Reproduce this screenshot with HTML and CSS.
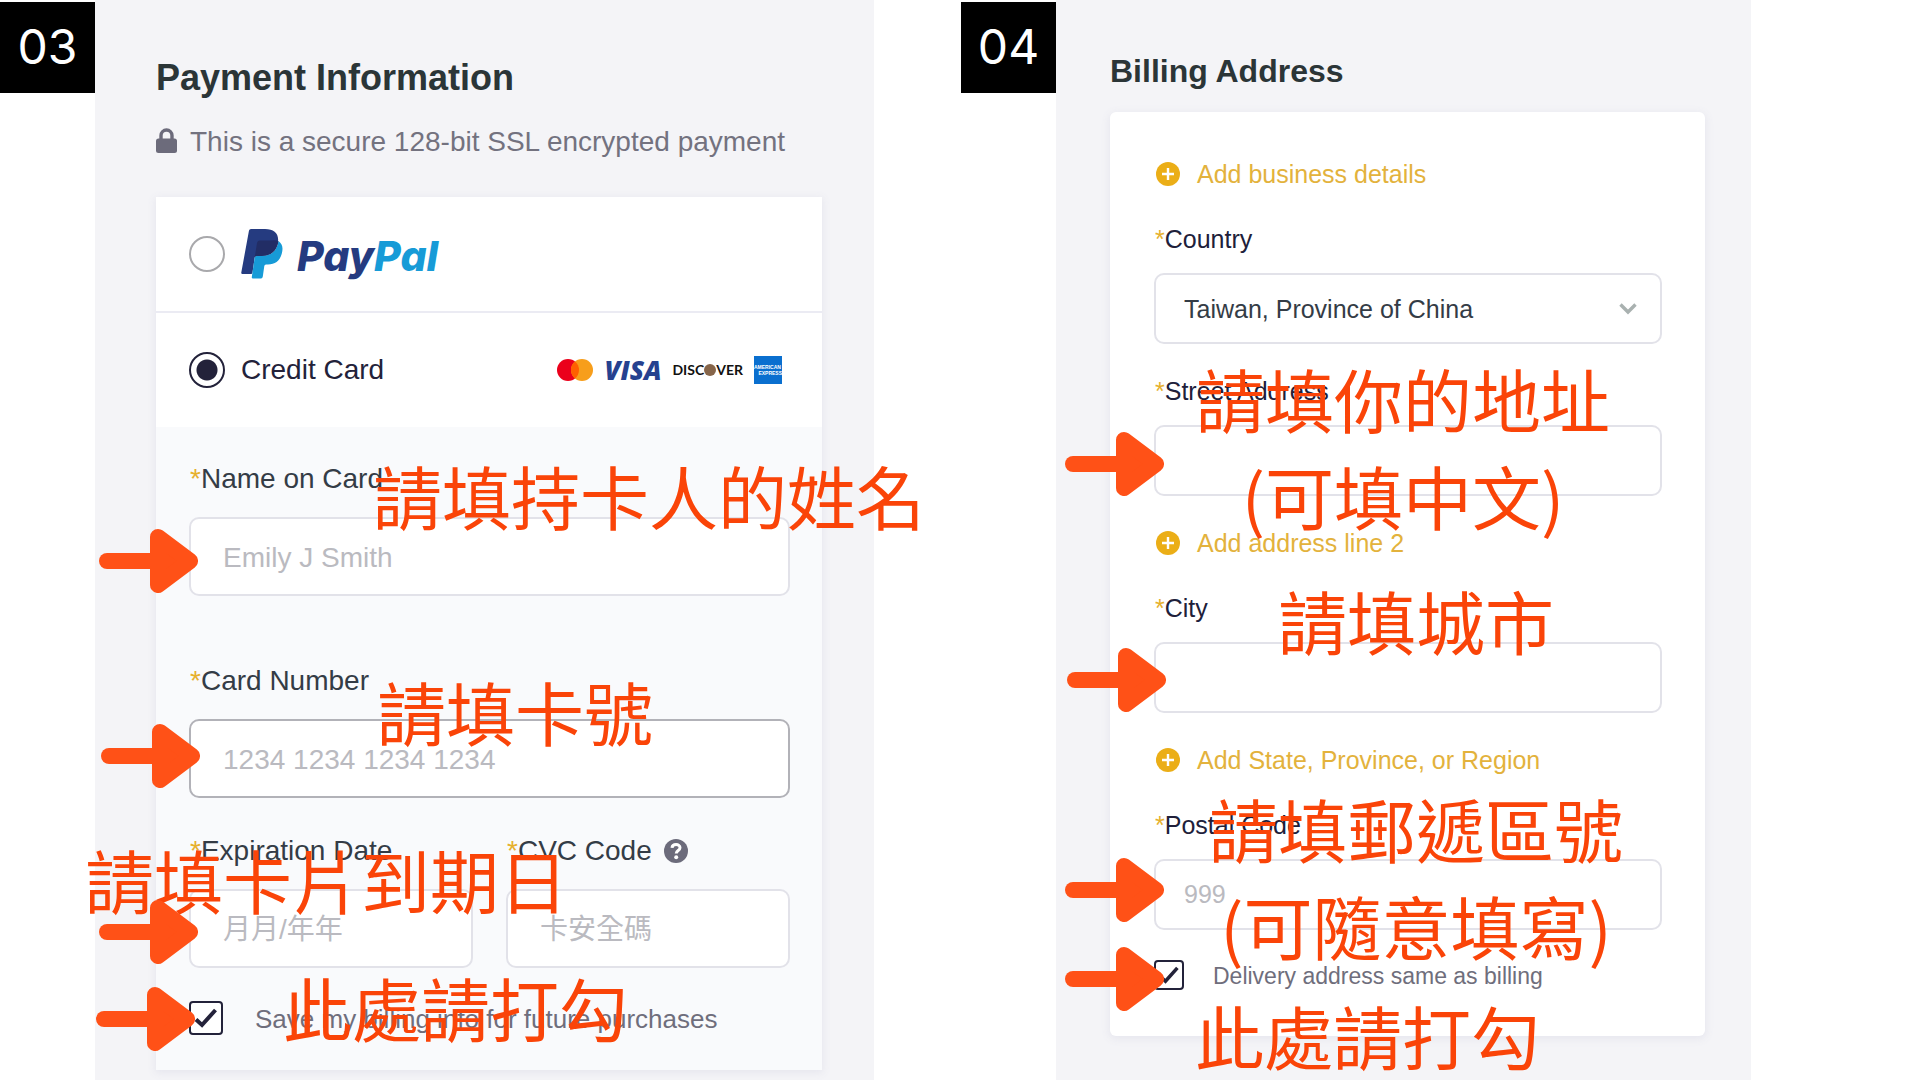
FILE: index.html
```html
<!DOCTYPE html>
<html lang="zh-Hant">
<head>
  <meta charset="UTF-8">
  <meta name="viewport" content="width=device-width, initial-scale=1.0">
  <title>Payment Information / Billing Address</title>
  <link rel="stylesheet" href="styles.css">
</head>
<body>
  <svg width="0" height="0" class="sprite" aria-hidden="true">
    <symbol id="arrow" viewBox="0 0 99 64">
      <rect x="0" y="24" width="66" height="16" rx="8" fill="#ff5117"/>
      <path d="M59 8 L91 32 L59 56 Z" fill="#ff5117" stroke="#ff5117" stroke-width="16" stroke-linejoin="round"/>
    </symbol>
    <symbol id="plus" viewBox="0 0 24 24">
      <circle cx="12" cy="12" r="12" fill="#ebae17"/>
      <path d="M12 6v12M6 12h12" stroke="#fff" stroke-width="2.4"/>
    </symbol>
    <symbol id="tick" viewBox="0 0 34 34">
      <path d="M7 18.500l6 5.500L26.500 9" fill="none" stroke="#23223a" stroke-width="4"/>
    </symbol>
  </svg>

  <main class="steps">
    <section class="step">
      <div class="badge">03</div>
      <div class="panel payment">
        <h1>Payment Information</h1>
        <p class="secure">
          <svg width="21" height="25" viewBox="0 0 21 25" aria-hidden="true">
            <path d="M5 12V7.500a5.500 5.500 0 0 1 11 0V12" fill="none" stroke="#6c6b7b" stroke-width="3.400"/>
            <rect x="0" y="10.500" width="21" height="14.500" rx="2.500" fill="#6c6b7b"/>
          </svg>
          This is a secure 128-bit SSL encrypted payment
        </p>
        <form class="card">
          <div class="method">
            <input type="radio" name="method" id="paypal" aria-label="PayPal">
            <label class="paypal" for="paypal">
              <svg width="42" height="50" viewBox="0 0 42 50" aria-hidden="true">
                <path d="M8 1.500Q8.300 0 10 0H24C33 0 38 4.500 37 12.500C35.500 22 29.500 27 20 27H15.500Q14 27 13.700 28.500L11.500 43.500Q11.300 45 10 45H1.500Q0 45 .3 43.500Z" fill="#253b80"/>
                <path d="M37.500 12C41.500 15 42.300 19 40.800 24.500C38.800 32 34 35.500 27 35.500H25Q23.500 35.500 23.300 37L21.800 47.500Q21.500 49.500 20 49.500H12Q10.500 49.500 10.800 48L13.700 28.500Q14 27 15.500 27H20C30 27 36 22 37.500 12Z" fill="#179bd7"/>
                <path d="M37.500 12C36 22 30 27 20 27H15.500Q14 27 13.700 28.500L16 14Q16.400 11.500 18.500 11.500H30Q35 11 37.500 12Z" fill="#222d65"/>
              </svg>
              <span class="wordmark"><span>Pay</span><b>Pal</b></span>
            </label>
          </div>
          <div class="method">
            <input type="radio" name="method" id="credit" checked>
            <label for="credit">Credit Card</label>
            <div class="brands">
              <svg width="36" height="22" viewBox="0 0 36 22" aria-label="Mastercard">
                <circle cx="11" cy="11" r="11" fill="#eb001b"/>
                <circle cx="25" cy="11" r="11" fill="#f79e1b"/>
                <path d="M18 2.500a11 11 0 0 1 0 17a11 11 0 0 1 0-17z" fill="#ff5f00"/>
              </svg>
              <span class="visa">VISA</span>
              <span class="discover">DISC<i></i>VER</span>
              <span class="amex"><span>AMERICAN</span><span>EXPRESS</span></span>
            </div>
          </div>
          <div class="fields">
            <div class="field">
              <label for="name">Name on Card</label>
              <input type="text" id="name" placeholder="Emily J Smith">
            </div>
            <div class="field number">
              <label for="number">Card Number</label>
              <input type="text" id="number" placeholder="1234 1234 1234 1234">
            </div>
            <div class="pair">
              <div class="field">
                <label for="expiry">Expiration Date</label>
                <input type="text" id="expiry" placeholder="月月/年年">
              </div>
              <div class="field">
                <div class="label-row">
                  <label for="cvc">CVC Code</label>
                  <svg width="24" height="24" viewBox="0 0 24 24" aria-hidden="true">
                    <circle cx="12" cy="12" r="12" fill="#6c6b7b"/>
                    <path d="M8 8.800C8.400 4.600 16 4.500 16 8.800C16 11.500 12.200 11.500 12.200 14.500" fill="none" stroke="#fff" stroke-width="3"/>
                    <circle cx="12.200" cy="18.300" r="2" fill="#fff"/>
                  </svg>
                </div>
                <input type="text" id="cvc" placeholder="卡安全碼">
              </div>
            </div>
            <div class="check">
              <span class="box">
                <input type="checkbox" id="save" checked>
                <svg aria-hidden="true"><use href="#tick"/></svg>
              </span>
              <label for="save">Save my billing info for future purchases</label>
            </div>
          </div>
        </form>

        <p class="note note-name">請填持卡人的姓名</p>
        <p class="note note-number">請填卡號</p>
        <p class="note note-expiry">請填卡片到期日</p>
        <p class="note note-save">此處請打勾</p>
        <svg class="arrow arrow-name"><use href="#arrow"/></svg>
        <svg class="arrow arrow-number"><use href="#arrow"/></svg>
        <svg class="arrow arrow-expiry"><use href="#arrow"/></svg>
        <svg class="arrow arrow-save"><use href="#arrow"/></svg>
      </div>
    </section>

    <section class="step">
      <div class="badge">04</div>
      <div class="panel billing">
        <h1>Billing Address</h1>
        <form class="card">
          <button type="button" class="add"><svg><use href="#plus"/></svg>Add business details</button>
          <div class="field">
            <label for="country">Country</label>
            <div class="select">
              <select id="country">
                <option>Taiwan, Province of China</option>
              </select>
              <svg width="18" height="12" viewBox="0 0 18 12" aria-hidden="true">
                <path d="M1.500 1.500L9 9L16.500 1.500" fill="none" stroke="#a9b1b0" stroke-width="3.400"/>
              </svg>
            </div>
          </div>
          <div class="field street">
            <label for="street">Street Address</label>
            <input type="text" id="street">
          </div>
          <button type="button" class="add"><svg><use href="#plus"/></svg>Add address line 2</button>
          <div class="field">
            <label for="city">City</label>
            <input type="text" id="city">
          </div>
          <button type="button" class="add"><svg><use href="#plus"/></svg>Add State, Province, or Region</button>
          <div class="field">
            <label for="postal">Postal Code</label>
            <input type="text" id="postal" placeholder="999">
          </div>
          <div class="check">
            <span class="box">
              <input type="checkbox" id="same" checked>
              <svg aria-hidden="true"><use href="#tick"/></svg>
            </span>
            <label for="same">Delivery address same as billing</label>
          </div>
        </form>

        <p class="note note-street">請填你的地址<br>(可填中文)</p>
        <p class="note note-city">請填城市</p>
        <p class="note note-postal">請填郵遞區號<br>(可隨意填寫)</p>
        <p class="note note-same">此處請打勾</p>
        <svg class="arrow arrow-street"><use href="#arrow"/></svg>
        <svg class="arrow arrow-city"><use href="#arrow"/></svg>
        <svg class="arrow arrow-postal"><use href="#arrow"/></svg>
        <svg class="arrow arrow-same"><use href="#arrow"/></svg>
      </div>
    </section>
  </main>
</body>
</html>
```
FILE: styles.css
```css
* {
  box-sizing: border-box;
}
body {
  margin: 0;
  background: #fff;
  font-family: "Liberation Sans", "Noto Sans CJK TC", Arial, sans-serif;
  color: #343c46;
}
h1, p {
  margin: 0;
}
input, select, button {
  font: inherit;
  color: inherit;
  margin: 0;
}
svg {
  flex: none;
}
.sprite {
  position: absolute;
}
.steps {
  display: grid;
  grid-template-columns: 1fr 1fr;
  gap: 2px;
  min-height: 100vh;
  overflow: hidden;
}
.step {
  display: flex;
  align-items: stretch;
}
.badge {
  flex: none;
  width: 95px;
  height: 91px;
  margin-top: 2px;
  background: #000;
  color: #fff;
  font-family: Inter, sans-serif;
  font-size: 48px;
  font-weight: 400;
  line-height: 90px;
  text-align: center;
}
.panel {
  position: relative;
  flex: 1;
  background: #f4f4f7;
}
.payment {
  margin-right: 85px;
  padding: 57px 52px 0 61px;
  font-size: 28px;
  line-height: 34px;
}
.billing {
  margin-right: 169px;
  padding: 52px 46px 0 54px;
  font-size: 25px;
  line-height: 30px;
}
h1 {
  color: #2b3537;
  font-weight: bold;
}
.payment h1 {
  font-size: 36px;
  line-height: 42px;
  margin-bottom: 26px;
}
.billing h1 {
  font-size: 32px;
  line-height: 38px;
  margin-bottom: 22px;
}
.secure {
  display: flex;
  align-items: center;
  gap: 13px;
  color: #73727f;
  margin-bottom: 38px;
}
.secure svg {
  margin-bottom: 4px;
}
.card {
  background: #fff;
  box-shadow: 0 2px 8px 1px #e6e6ee;
}

/* payment methods */
.method {
  display: flex;
  align-items: center;
  gap: 16px;
  height: 114px;
  padding: 0 40px 0 33px;
  color: #23223a;
}
.method:first-child {
  height: 116px;
  border-bottom: 2px solid #ebebf3;
}
.method input {
  appearance: none;
  width: 36px;
  height: 36px;
  border: 2px solid #a9a9ac;
  border-radius: 50%;
}
.method input:checked {
  border-color: #23223a;
  background: radial-gradient(circle, #23223a 10px, transparent 11px);
}
.paypal {
  display: flex;
  align-items: center;
  gap: 14px;
}
.wordmark {
  padding-top: 4px;
  font-family: Inter, sans-serif;
  font-size: 41px;
  line-height: 50px;
  font-weight: 800;
  font-style: italic;
  color: #253b80;
}
.wordmark b {
  font-weight: 800;
  color: #179bd7;
}
.brands {
  display: flex;
  align-items: center;
  gap: 11px;
  margin-left: auto;
  line-height: 28px;
}
.visa {
  font-family: "Open Sans", sans-serif;
  font-size: 26px;
  font-weight: 800;
  font-style: italic;
  color: #26418f;
}
.discover {
  display: flex;
  align-items: center;
  font-family: Lato, sans-serif;
  font-size: 14px;
  font-weight: 700;
  color: #111;
}
.discover i {
  width: 12px;
  height: 12px;
  border-radius: 50%;
  background: #86654a;
}
.amex {
  display: flex;
  flex-direction: column;
  justify-content: center;
  width: 28px;
  height: 28px;
  overflow: hidden;
  background: #0a6fcf;
  color: #fff;
  font-size: 5px;
  font-weight: bold;
  line-height: 6px;
}
.amex span:last-child {
  text-align: right;
}

/* form fields */
.payment .fields {
  padding: 35px 32px 34px 33px;
  background: #f9fafc;
}
.billing .card {
  padding: 47px 43px 45px 44px;
  border-radius: 6px;
}
.field {
  display: flex;
  flex-direction: column;
}
.payment .field {
  gap: 21px;
}
.billing .field {
  gap: 19px;
}
.field label {
  padding-left: 1px;
}
.field label::before {
  content: "*";
  color: #e6b02e;
}
.billing .field label {
  color: #20203a;
}
.field input, .field select {
  appearance: none;
  width: 100%;
  min-width: 0;
  background: #fff;
  border: 2px solid #e2e2e9;
  border-radius: 10px;
}
.field input::placeholder {
  color: #babac0;
  opacity: 1;
}
.payment .field input {
  height: 79px;
  padding: 2px 32px 0;
}
.billing .field input, .billing .field select {
  height: 71px;
  padding: 0 28px;
}
.payment .number {
  margin: 68px 0 36px;
}
.payment .number input {
  border-color: #b2b2b8;
}
.pair {
  display: grid;
  grid-template-columns: 1fr 1fr;
  gap: 33px;
}
.label-row {
  display: flex;
  align-items: center;
  gap: 12px;
}
.select {
  display: grid;
  align-items: center;
}
.select select, .select svg {
  grid-area: 1 / 1;
}
.select svg {
  justify-self: end;
  margin-right: 25px;
  pointer-events: none;
}
.add {
  display: flex;
  align-items: center;
  gap: 17px;
  padding: 0 2px;
  border: 0;
  background: none;
  color: #e3b23c;
  cursor: pointer;
}
.add svg {
  width: 24px;
  height: 24px;
}
.add + .field {
  margin-top: 35px;
}
.field + .add, .street {
  margin-top: 32px;
}
.check {
  display: flex;
  align-items: center;
  color: #6f6e7c;
}
.check label {
  padding-top: 3px;
}
.payment .check {
  gap: 32px;
  margin-top: 31px;
  font-size: 26px;
}
.billing .check {
  gap: 29px;
  margin-top: 28px;
  font-size: 23px;
}
.box {
  display: grid;
}
.box input, .box svg {
  grid-area: 1 / 1;
  width: 34px;
  height: 34px;
}
.billing .box input, .billing .box svg {
  width: 30px;
  height: 30px;
}
.box input {
  appearance: none;
  background: #fff;
  border: 2px solid #23223a;
  border-radius: 4px;
}
.box svg {
  pointer-events: none;
}

/* hand-placed notes and arrows over the forms */
.note {
  position: absolute;
  font-family: "Noto Sans CJK TC", sans-serif;
  font-size: 69px;
  line-height: 97px;
  text-align: center;
  white-space: nowrap;
  color: #fa4408;
  pointer-events: none;
}
.arrow {
  position: absolute;
  width: 99px;
  height: 64px;
  pointer-events: none;
}
.note-name { left: 278px; top: 447px; }
.note-number { left: 282px; top: 663px; }
.note-expiry { left: -10px; top: 831px; }
.note-save { left: 188px; top: 959px; }
.note-street { left: 140px; top: 350px; }
.note-city { left: 222px; top: 572px; }
.note-postal { left: 153px; top: 780px; }
.note-same { left: 139px; top: 987px; }
.arrow-name { left: 4px; top: 529px; }
.arrow-number { left: 6px; top: 724px; }
.arrow-expiry { left: 4px; top: 900px; }
.arrow-save { left: 1px; top: 987px; }
.arrow-street { left: 9px; top: 432px; }
.arrow-city { left: 11px; top: 648px; }
.arrow-postal { left: 9px; top: 858px; }
.arrow-same { left: 9px; top: 947px; }
```
